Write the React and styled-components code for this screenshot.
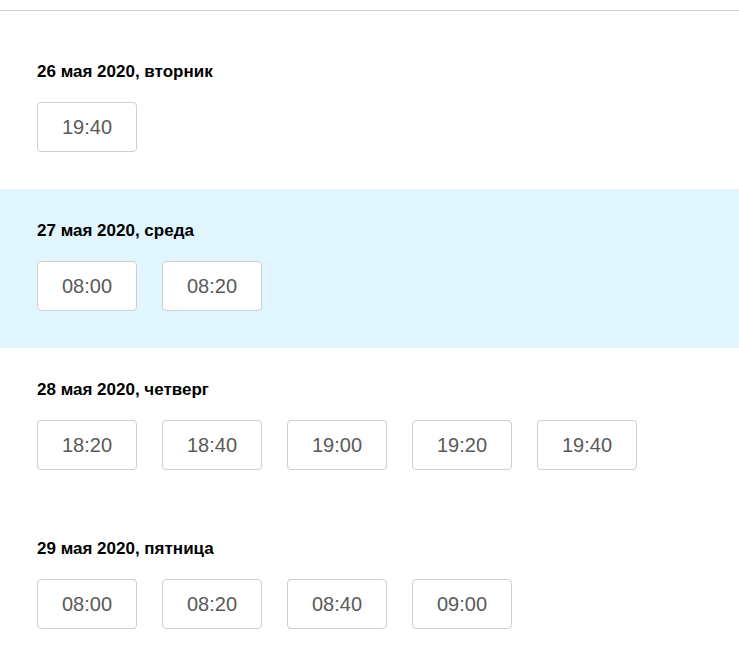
import React from "react";
import styled, { createGlobalStyle } from "styled-components";

const Global = createGlobalStyle`
  html, body { margin: 0; padding: 0; background: #fff; }
  body { font-family: "Liberation Sans", Arial, sans-serif; }
`;

const Page = styled.div`
  width: 739px;
  display: flex;
  flex-direction: column;
`;

const TopBar = styled.div`
  height: 10px;
  border-bottom: 1px solid #d0d0d0;
`;

const Spacer = styled.div`
  height: 19px;
`;

const Day = styled.section`
  height: 159px;
  box-sizing: border-box;
  padding: 32px 37px 0;
  background: ${(p) => (p.$active ? "#e1f5fe" : "#fff")};
  display: flex;
  flex-direction: column;
  gap: 20px;
`;

const Title = styled.h3`
  margin: 0;
  font-size: 17px;
  line-height: 20px;
  font-weight: 700;
  color: #000;
`;

const Slots = styled.div`
  display: flex;
  gap: 25px;
`;

const Slot = styled.button`
  width: 100px;
  height: 50px;
  box-sizing: border-box;
  border: 1px solid #cfcfcf;
  border-radius: 4px;
  background: #fff;
  font-family: "Liberation Sans", Arial, sans-serif;
  font-size: 20px;
  color: #5a5a5a;
  padding: 0;
  cursor: pointer;
`;

const days = [
  { title: "26 мая 2020, вторник", slots: ["19:40"] },
  { title: "27 мая 2020, среда", slots: ["08:00", "08:20"], active: true },
  { title: "28 мая 2020, четверг", slots: ["18:20", "18:40", "19:00", "19:20", "19:40"] },
  { title: "29 мая 2020, пятница", slots: ["08:00", "08:20", "08:40", "09:00"] },
];

export default function App() {
  return (
    <>
      <Global />
      <Page>
        <TopBar />
        <Spacer />
        {days.map((d) => (
          <Day key={d.title} $active={d.active}>
            <Title>{d.title}</Title>
            <Slots>
              {d.slots.map((s) => (
                <Slot key={s}>{s}</Slot>
              ))}
            </Slots>
          </Day>
        ))}
      </Page>
    </>
  );
}
